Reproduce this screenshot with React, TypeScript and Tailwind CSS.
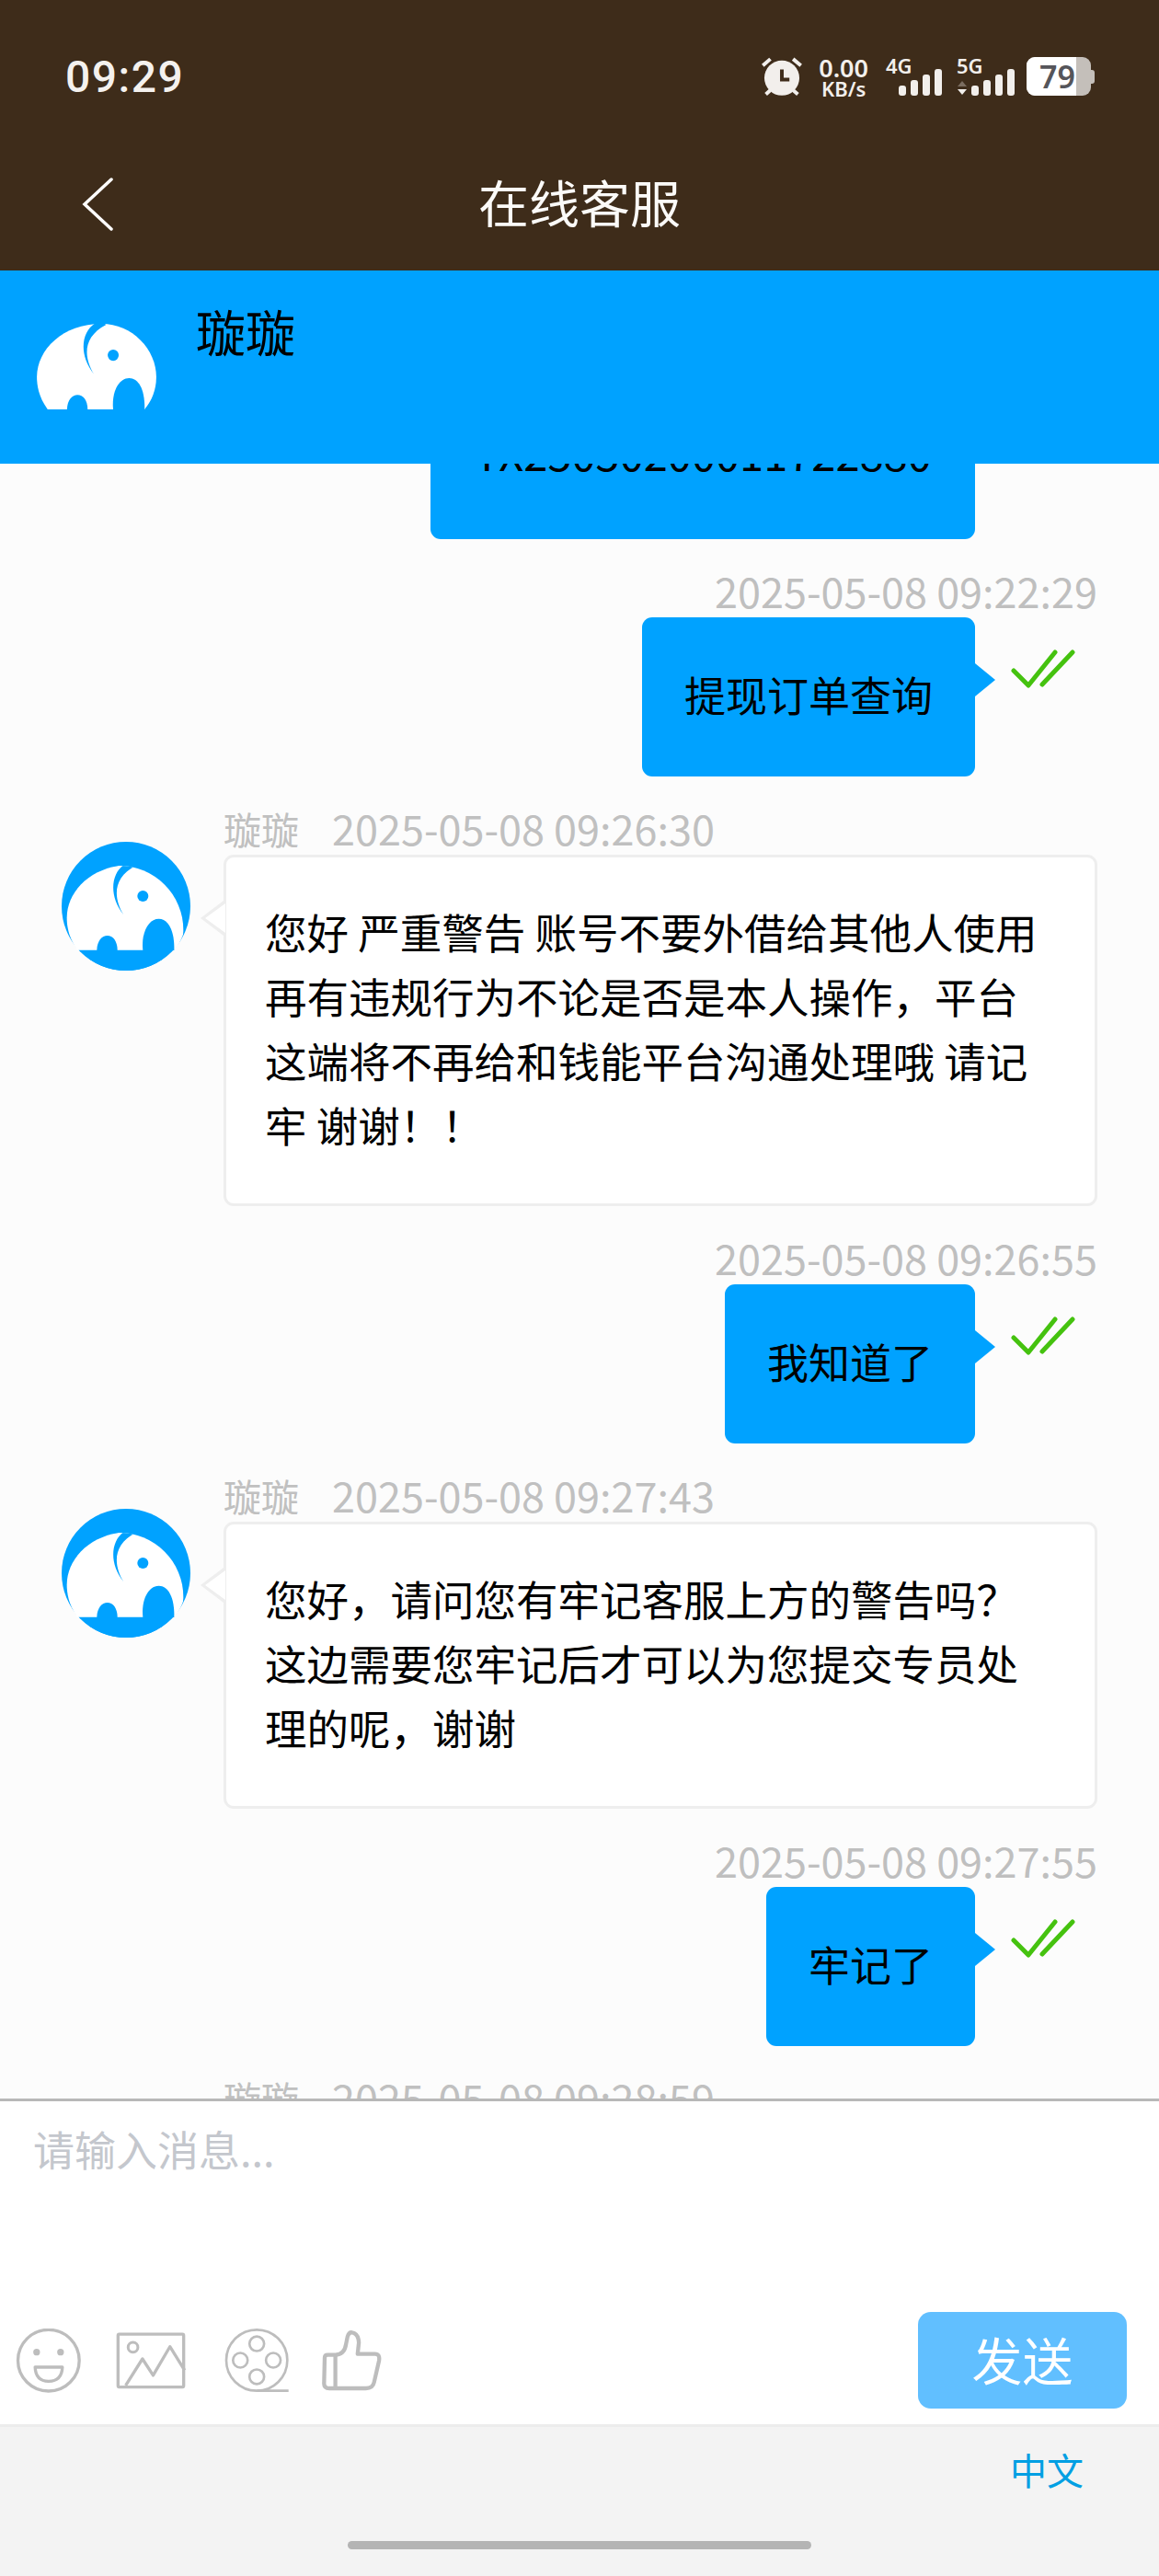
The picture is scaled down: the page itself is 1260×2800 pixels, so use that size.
const ACCENT = "#00a2ff";

// Elephant mark; coordinates are shared by the header logo and the round avatar.
function ElephantShape({ fill }: { fill: string }) {
  return (
    <>
      <path
        d="M155 375C125 335 120 295 120 270C120 180 205 97 330 97C430 97 508 180 508 270C508 310 495 345 470 375Z"
        fill="#fff"
      />
      <path d="M312 94C270 115 250 190 305 260C272 205 268 140 345 100C335 92 322 92 312 94Z" fill={fill} />
      <circle cx="368" cy="199" r="18" fill={fill} />
      <path d="M218 376C218 345 235 328 252 328C270 328 285 345 285 376Z" fill={fill} />
      <path d="M368 376C362 320 385 273 420 273C450 273 472 310 470 376Z" fill={fill} />
    </>
  );
}

function HeaderLogo() {
  return (
    <svg width="130" height="93" viewBox="120 97 388 278" className="block">
      <ElephantShape fill={ACCENT} />
    </svg>
  );
}

function Avatar() {
  return (
    <svg width="140" height="140" viewBox="80 100 420 420" className="block shrink-0">
      <defs>
        <clipPath id="avatar-circle">
          <circle cx="290" cy="310" r="210" />
        </clipPath>
      </defs>
      <circle cx="290" cy="310" r="210" fill={ACCENT} />
      <g clipPath="url(#avatar-circle)" transform="translate(-23 78)">
        <ElephantShape fill={ACCENT} />
      </g>
      <rect x="80" y="454" width="420" height="70" fill={ACCENT} clipPath="url(#avatar-circle)" />
    </svg>
  );
}

function AlarmIcon() {
  return (
    <svg width="44" height="43" viewBox="146 94 134 130" className="block">
      <circle cx="213" cy="163" r="58" fill="#f2efec" />
      <path d="M213 135V168H238" fill="none" stroke="#3e2c1a" strokeWidth="12" />
      <path
        d="M150 122L175 100M276 122L250 100M160 217L175 203M266 217L250 203"
        stroke="#f2efec"
        strokeWidth="12"
        fill="none"
      />
    </svg>
  );
}

function SignalBars() {
  return (
    <svg width="47" height="29" viewBox="0 0 47 29" className="block">
      <rect x="0" y="18" width="8" height="11" rx="3" fill="#f2efec" />
      <rect x="13" y="12" width="8" height="17" rx="3" fill="#f2efec" />
      <rect x="26" y="6" width="8" height="23" rx="3" fill="#f2efec" />
      <rect x="39" y="0" width="8" height="29" rx="3" fill="#f2efec" />
    </svg>
  );
}

function StatusBar() {
  return (
    <div className="flex h-[168px] items-start justify-between pl-[71px] pr-[70px] pt-[62px]">
      <span className="font-['Roboto',sans-serif] text-[48px] font-medium leading-[44px] tracking-[1.5px] text-[#f4f1ee]">
        09:29
      </span>
      <div className="flex items-start font-['Noto_Sans',sans-serif] font-semibold text-[#f2efec]">
        <AlarmIcon />
        <div className="ml-[18px] flex flex-col items-center">
          <span className="text-[27px] leading-[24px]">0.00</span>
          <span className="text-[22px] leading-[20px]">KB/s</span>
        </div>
        <div className="relative ml-[19px] h-[42px] w-[61px]">
          <span className="absolute left-0 top-[-3px] text-[22px] leading-[24px]">4G</span>
          <div className="absolute bottom-0 right-0">
            <SignalBars />
          </div>
        </div>
        <div className="relative ml-[16px] h-[42px] w-[63px]">
          <span className="absolute left-0 top-[-3px] text-[22px] leading-[24px]">5G</span>
          <svg width="10" height="15" viewBox="0 0 10 15" className="absolute left-px top-[26px]">
            <path d="M5 0L10 6H0Z" fill="#7b6d60" />
            <path d="M0 9H10L5 15Z" fill="#f2efec" />
          </svg>
          <div className="absolute bottom-0 right-0">
            <SignalBars />
          </div>
        </div>
        <div className="ml-[13px] flex items-center">
          <div className="flex h-[42px] w-[70px] items-center rounded-[9px] bg-[#c4bfba]">
            <div className="flex h-full w-[54px] items-center justify-end rounded-l-[9px] bg-white pr-px text-[34px] leading-none text-[#55555a]">
              79
            </div>
          </div>
          <div className="h-[15px] w-[4px] rounded-r-[3px] bg-[#c4bfba]" />
        </div>
      </div>
    </div>
  );
}

function NavBar() {
  return (
    <div className="relative flex h-[126px] items-center justify-center pb-[26px]">
      <svg width="34" height="58" viewBox="0 0 34 58" className="absolute left-[89px] top-[25px]">
        <path d="M32 2L3 29L32 56" fill="none" stroke="#fff" strokeWidth="3.5" strokeLinecap="round" />
      </svg>
      <span className="text-[55px] leading-[70px] text-[#fbfaf8]">在线客服</span>
    </div>
  );
}

function ReadTicks() {
  return (
    <svg width="70" height="42" viewBox="0 0 70 42" className="absolute left-[calc(100%+39px)] top-[35px]">
      <path
        d="M3 23L19 39L48 3M34 38L67 3"
        fill="none"
        stroke="#45c20f"
        strokeWidth="5"
        strokeLinecap="round"
        strokeLinejoin="round"
      />
    </svg>
  );
}

function Outgoing({ time, text, width }: { time: string; text: string; width: string }) {
  return (
    <div className="mt-[35px] flex flex-col items-end pr-[67px]">
      <span className="h-[50px] text-[45px] leading-[42px] text-[#bfbfbf]">{time}</span>
      <div
        className={`relative mr-[133px] flex h-[173px] items-center justify-center rounded-[11px] bg-[#00a2ff] pb-[5px] text-[45px] leading-[70px] text-black ${width}`}
      >
        {text}
        <div className="absolute left-full top-[50px] h-0 w-0 border-y-[18px] border-l-[22px] border-y-transparent border-l-[#00a2ff]" />
        <ReadTicks />
      </div>
    </div>
  );
}

function Incoming({ time, lines }: { time: string; lines: string[] }) {
  return (
    <div className="mt-[35px] flex pl-[67px] pr-[67px]">
      <div className="mt-[36px]">
        <Avatar />
      </div>
      <div className="ml-[36px] flex-1">
        <div className="flex h-[50px] items-start text-[#c0c0c0]">
          <span className="w-[118px] text-[41px] leading-[42px]">璇璇</span>
          <span className="text-[45px] leading-[42px]">{time}</span>
        </div>
        <div className="relative rounded-[11px] border-[3px] border-[#eeeeee] bg-white pb-[51px] pl-[42px] pr-[20px] pt-[45px] text-[45.5px] leading-[70px] text-black">
          {/* bubble pointer: outer triangle forms the border, inner one the fill */}
          <div className="absolute left-[-28px] top-[47px] h-0 w-0 border-y-[19px] border-r-[25px] border-y-transparent border-r-[#eeeeee]" />
          <div className="absolute left-[-23px] top-[50px] h-0 w-0 border-y-[16px] border-r-[22px] border-y-transparent border-r-white" />
          {lines.map((line) => (
            <div key={line} className="whitespace-pre">
              {line}
            </div>
          ))}
        </div>
      </div>
    </div>
  );
}

function Toolbar() {
  return (
    <div className="flex items-center pl-[17px]">
      {/* smile */}
      <svg width="72" height="70" viewBox="50 150 215 210" fill="none" stroke="#bdbdbd" strokeWidth="10">
        <circle cx="157" cy="254" r="100" />
        <circle cx="118" cy="227" r="11" fill="#bdbdbd" stroke="none" />
        <circle cx="196" cy="227" r="11" fill="#bdbdbd" stroke="none" />
        <path d="M113 276H202Q200 322 157 322Q115 322 113 276Z" strokeLinejoin="round" />
      </svg>
      {/* picture */}
      <svg width="78" height="65" viewBox="375 155 235 195" fill="none" stroke="#bdbdbd" strokeWidth="10" className="ml-[36px]">
        <rect x="385" y="167" width="215" height="173" rx="4" />
        <circle cx="434" cy="210" r="16" strokeWidth="9" />
        <path d="M410 335L465 248L500 302L555 208L603 285" strokeLinejoin="round" />
      </svg>
      {/* film reel */}
      <svg width="73" height="71" viewBox="725 148 220 212" fill="none" stroke="#bdbdbd" strokeWidth="8" className="ml-[40px]">
        <circle cx="834" cy="254" r="100" />
        <circle cx="834" cy="200" r="24" />
        <circle cx="780" cy="254" r="24" />
        <circle cx="888" cy="254" r="24" />
        <circle cx="834" cy="308" r="24" />
        <path d="M834 354H938" />
      </svg>
      {/* thumbs up */}
      <svg width="67" height="68" viewBox="1048 152 202 205" fill="none" stroke="#bdbdbd" strokeWidth="13" strokeLinejoin="round" className="ml-[33px]">
        <path d="M1060 245Q1060 235 1070 235H1095Q1125 235 1130 200L1135 175Q1140 160 1150 162Q1170 165 1172 195L1168 232H1225Q1242 232 1238 255L1222 325Q1218 345 1195 345H1075Q1058 345 1058 330Z" />
        <path d="M1095 235V345" />
      </svg>
    </div>
  );
}

export default function App() {
  return (
    <div className="flex h-[2800px] w-[1260px] flex-col overflow-hidden bg-white font-['Noto_Sans_CJK_SC',sans-serif]">
      <header className="h-[294px] shrink-0 bg-[#3e2c1a]">
        <StatusBar />
        <NavBar />
      </header>

      <div className="z-10 flex h-[210px] shrink-0 items-start bg-[#00a2ff] pl-[40px]">
        <div className="mt-[58px]">
          <HeaderLogo />
        </div>
        <span className="ml-[43px] mt-[31px] text-[54px] leading-[70px] text-black">璇璇</span>
      </div>

      <main className="min-h-0 flex-1 overflow-hidden bg-[#fcfcfc]">
        {/* message list, scrolled so the first bubble is partly hidden */}
        <div className="mt-[-91px] flex justify-end pr-[200px]">
          <div className="flex h-[173px] w-[592px] items-center justify-center rounded-[11px] bg-[#00a2ff] pb-[16px] text-[47px] leading-[70px] text-black">
            TX25050200011722880
          </div>
        </div>
        <Outgoing time="2025-05-08 09:22:29" text="提现订单查询" width="w-[362px]" />
        <Incoming
          time="2025-05-08 09:26:30"
          lines={[
            "您好 严重警告 账号不要外借给其他人使用",
            "再有违规行为不论是否是本人操作，平台",
            "这端将不再给和钱能平台沟通处理哦 请记",
            "牢 谢谢！！",
          ]}
        />
        <Outgoing time="2025-05-08 09:26:55" text="我知道了" width="w-[272px]" />
        <Incoming
          time="2025-05-08 09:27:43"
          lines={[
            "您好，请问您有牢记客服上方的警告吗？",
            "这边需要您牢记后才可以为您提交专员处",
            "理的呢，谢谢",
          ]}
        />
        <Outgoing time="2025-05-08 09:27:55" text="牢记了" width="w-[227px]" />
        <Incoming time="2025-05-08 09:28:59" lines={["您好"]} />
      </main>

      <section className="z-10 flex h-[354px] shrink-0 flex-col border-t-[3px] border-[#b8b8b8] bg-white">
        <textarea
          readOnly
          placeholder="请输入消息..."
          className="h-[229px] w-full resize-none px-[36px] pt-[22px] text-[45px] leading-[60px] outline-none placeholder:text-[#c4c7cd]"
        />
        <div className="flex items-center justify-between pr-[35px]">
          <Toolbar />
          <button className="flex h-[105px] w-[227px] items-center justify-center rounded-[14px] bg-[#61bfff] pb-[5px] text-[55px] leading-none text-white">
            发送
          </button>
        </div>
      </section>

      <footer className="flex h-[165px] shrink-0 flex-col border-t-[3px] border-[#ececec] bg-[#f3f3f3]">
        <div className="flex justify-end pr-[82px] pt-[18px]">
          <span className="text-[40px] leading-[56px] text-[#009fe3]">中文</span>
        </div>
        <div className="mx-auto mt-[50px] h-[9px] w-[504px] rounded-full bg-[#b4b4b4]" />
      </footer>
    </div>
  );
}
